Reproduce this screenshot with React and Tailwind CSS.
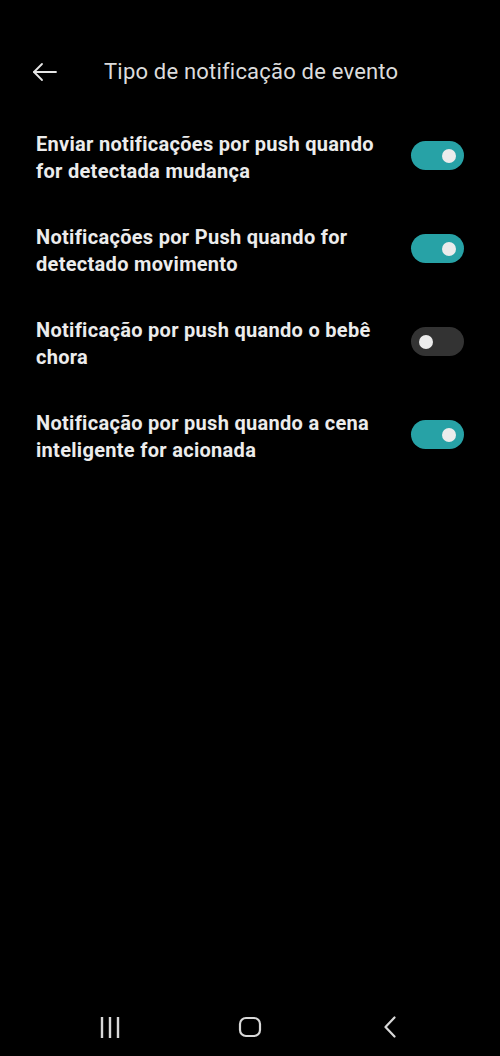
import React, { useState } from 'react';

const items = [
    { id: 1, text: 'Enviar notificações por push quando for detectada mudança', on: true },
    { id: 2, text: 'Notificações por Push quando for detectado movimento', on: true },
    { id: 3, text: 'Notificação por push quando o bebê chora', on: false },
    { id: 4, text: 'Notificação por push quando a cena inteligente for acionada', on: true },
];

function Toggle({ on, onClick }) {
    return (
        <button
            onClick={onClick}
            className={`relative w-[53px] h-[29px] rounded-full shrink-0 ${on ? 'bg-[#27a2a6]' : 'bg-[#333333]'}`}
        >
            <span
                className={`absolute top-[7.5px] w-[14px] h-[14px] rounded-full bg-[#ececec] ${on ? 'left-[31px]' : 'left-[8px]'}`}
            />
        </button>
    );
}

export default function App() {
    const [state, setState] = useState(items);

    const flip = (id) => setState(s => s.map(i => i.id === id ? { ...i, on: !i.on } : i));

    return (
        <div className="w-[500px] h-[1056px] bg-black flex flex-col font-['Roboto',sans-serif] text-[#ececec]">
            <div className="h-[56px] mt-[44px] flex items-center">
                <div className="w-[104px] pl-[32px] flex items-center">
                    <svg width="26" height="20" viewBox="0 0 26 20" fill="none" stroke="#e6e6e6" strokeWidth="1.8" strokeLinecap="round" strokeLinejoin="round">
                        <path d="M24 10H2" />
                        <path d="M10 2L2 10L10 18" />
                    </svg>
                </div>
                <h1 className="text-[22px] tracking-[0.2px] text-[#dcdcdc] -mt-[1px]">Tipo de notificação de evento</h1>
            </div>

            <div className="flex flex-col pt-[20px]">
                {state.map(item => (
                    <div key={item.id} className="h-[93px] flex items-start pl-[36px] pr-[36px]">
                        <p className="flex-1 pr-[30px] text-[20px] tracking-[0.3px] font-bold leading-[27px] pt-[11px]">{item.text}</p>
                        <div className="pt-[21px]">
                            <Toggle on={item.on} onClick={() => flip(item.id)} />
                        </div>
                    </div>
                ))}
            </div>

            <div className="flex-1" />

            <div className="h-[62px] flex items-center justify-center pt-[4px]">
                <div className="w-[140px] flex justify-center">
                    <svg width="22" height="21" viewBox="0 0 22 21" stroke="#d8d8d8" strokeWidth="2.4">
                        <path d="M3 0V21M11 0V21M19 0V21" />
                    </svg>
                </div>
                <div className="w-[140px] flex justify-center">
                    <svg width="24" height="22" viewBox="0 0 24 22" fill="none" stroke="#d8d8d8" strokeWidth="2.2">
                        <rect x="2" y="2" width="20" height="18" rx="6" />
                    </svg>
                </div>
                <div className="w-[140px] flex justify-center">
                    <svg width="14" height="22" viewBox="0 0 14 22" fill="none" stroke="#d8d8d8" strokeWidth="2.2" strokeLinecap="round" strokeLinejoin="round">
                        <path d="M11.5 1.5L2.5 11L11.5 20.5" />
                    </svg>
                </div>
            </div>
        </div>
    );
}
